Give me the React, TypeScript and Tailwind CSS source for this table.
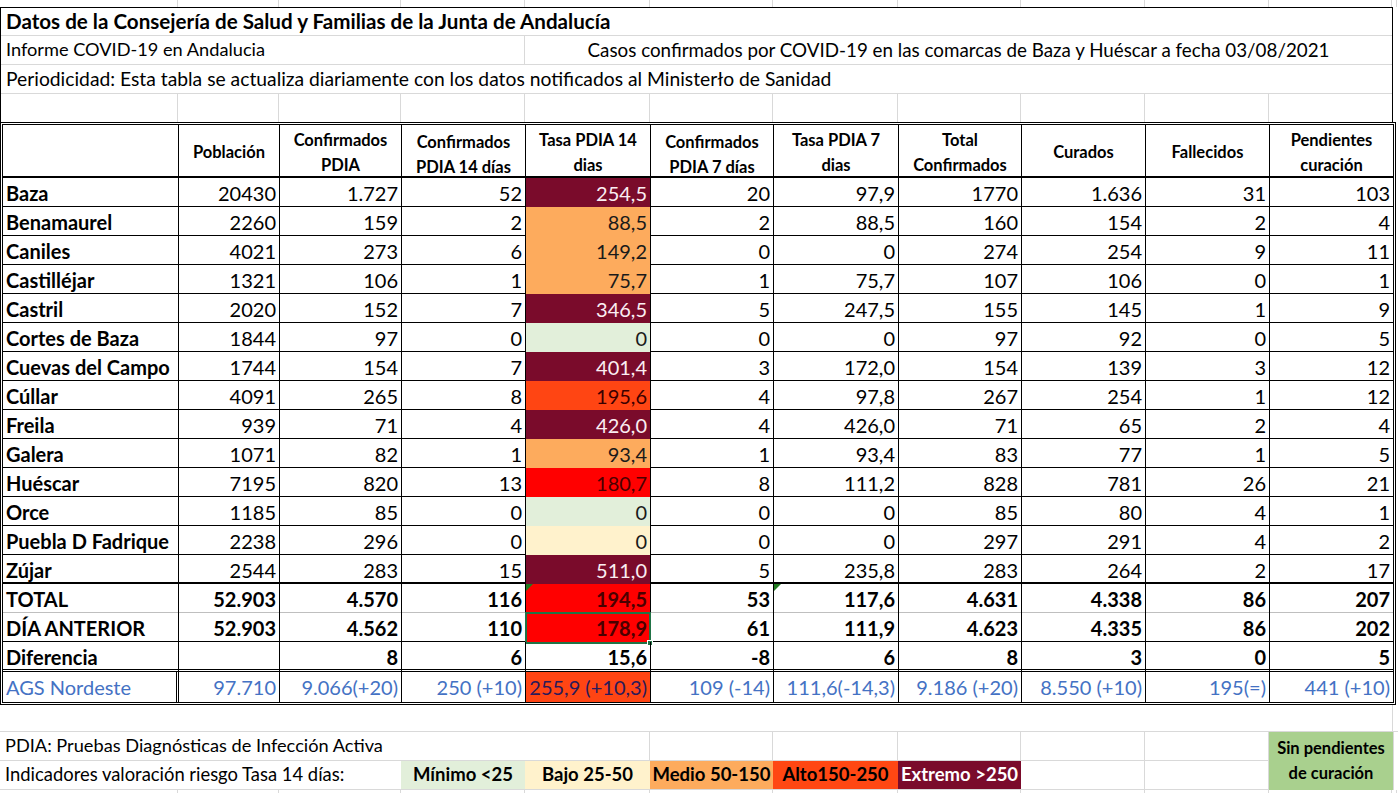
import clsx from 'clsx';

type Level = 'min' | 'bajo' | 'medio' | 'alto' | 'rojo' | 'extremo' | 'none';

interface Row {
  name: string;
  values: string[];
  level: Level;
}

const rows: Row[] = [
  { name: 'Baza', values: ['20430', '1.727', '52', '254,5', '20', '97,9', '1770', '1.636', '31', '103'], level: 'extremo' },
  { name: 'Benamaurel', values: ['2260', '159', '2', '88,5', '2', '88,5', '160', '154', '2', '4'], level: 'medio' },
  { name: 'Caniles', values: ['4021', '273', '6', '149,2', '0', '0', '274', '254', '9', '11'], level: 'medio' },
  { name: 'Castilléjar', values: ['1321', '106', '1', '75,7', '1', '75,7', '107', '106', '0', '1'], level: 'medio' },
  { name: 'Castril', values: ['2020', '152', '7', '346,5', '5', '247,5', '155', '145', '1', '9'], level: 'extremo' },
  { name: 'Cortes de Baza', values: ['1844', '97', '0', '0', '0', '0', '97', '92', '0', '5'], level: 'min' },
  { name: 'Cuevas del Campo', values: ['1744', '154', '7', '401,4', '3', '172,0', '154', '139', '3', '12'], level: 'extremo' },
  { name: 'Cúllar', values: ['4091', '265', '8', '195,6', '4', '97,8', '267', '254', '1', '12'], level: 'alto' },
  { name: 'Freila', values: ['939', '71', '4', '426,0', '4', '426,0', '71', '65', '2', '4'], level: 'extremo' },
  { name: 'Galera', values: ['1071', '82', '1', '93,4', '1', '93,4', '83', '77', '1', '5'], level: 'medio' },
  { name: 'Huéscar', values: ['7195', '820', '13', '180,7', '8', '111,2', '828', '781', '26', '21'], level: 'rojo' },
  { name: 'Orce', values: ['1185', '85', '0', '0', '0', '0', '85', '80', '4', '1'], level: 'min' },
  { name: 'Puebla D Fadrique', values: ['2238', '296', '0', '0', '0', '0', '297', '291', '4', '2'], level: 'bajo' },
  { name: 'Zújar', values: ['2544', '283', '15', '511,0', '5', '235,8', '283', '264', '2', '17'], level: 'extremo' },
];

const levelClass: Record<Level, string> = {
  min: 'bg-[#e2efda] text-[#1a1a1a]',
  bajo: 'bg-[#fff2cc] text-[#1a1a1a]',
  medio: 'bg-[#fdab5d] text-[#1a1a1a]',
  alto: 'bg-[#ff4513] text-[#3a0000]',
  rojo: 'bg-[#ff0000] text-[#4a0000]',
  extremo: 'bg-[#7a0b2b] text-[#fbeef2]',
  none: '',
};

const TABLE_COLS =
  'grid grid-cols-[176px_101px_122px_124px_125px_123px_125px_123px_124px_124px_123px]';
const BOX_COLS =
  'grid grid-cols-[177px_101px_122px_124px_125px_123px_125px_123px_124px_124px_123px]';
const SHEET_COLS =
  'grid grid-cols-[178px_101px_122px_124px_125px_123px_125px_123px_124px_124px_123px_5px]';

const headers = [
  ['Población'],
  ['Confirmados', 'PDIA'],
  ['Confirmados', 'PDIA 14 días'],
  ['Tasa PDIA 14', 'dias'],
  ['Confirmados', 'PDIA 7 días'],
  ['Tasa PDIA 7', 'dias'],
  ['Total', 'Confirmados'],
  ['Curados'],
  ['Fallecidos'],
  ['Pendientes', 'curación'],
];

function GreenTick() {
  return (
    <svg className="absolute left-0 top-0 z-10" width="7" height="7" viewBox="0 0 7 7">
      <polygon points="0,0 7,0 0,7" fill="#1f7a1f" />
    </svg>
  );
}

function NumCell({
  children,
  className,
  last,
}: {
  children?: React.ReactNode;
  className?: string;
  last?: boolean;
}) {
  return (
    <div
      className={clsx(
        'relative flex items-center justify-end pr-[3px] whitespace-nowrap',
        !last && 'border-r border-black',
        className,
      )}
    >
      {children}
    </div>
  );
}

function DataRow({ row, isLast }: { row: Row; isLast: boolean }) {
  return (
    <div
      className={clsx(
        TABLE_COLS,
        'h-[29px] border-black text-[20px]',
        isLast ? 'border-b-2' : 'border-b',
      )}
    >
      <div className="flex items-center pl-[3px] font-bold border-r border-black whitespace-nowrap">
        {row.name}
      </div>
      {row.values.map((v, i) => (
        <NumCell key={i} last={i === 9} className={i === 3 ? levelClass[row.level] : ''}>
          {v}
        </NumCell>
      ))}
    </div>
  );
}

function SheetStrip({ className }: { className?: string }) {
  return (
    <div className={clsx(SHEET_COLS, className)}>
      {Array.from({ length: 12 }).map((_, i) => (
        <div key={i} className="border-r border-[#d9d9d9]" />
      ))}
    </div>
  );
}

export default function App() {
  const total = ['52.903', '4.570', '116', '194,5', '53', '117,6', '4.631', '4.338', '86', '207'];
  const prev = ['52.903', '4.562', '110', '178,9', '61', '111,9', '4.623', '4.335', '86', '202'];
  const diff = ['', '8', '6', '15,6', '-8', '6', '8', '3', '0', '5'];
  const ags = [
    '97.710',
    '9.066(+20)',
    '250 (+10)',
    '255,9 (+10,3)',
    '109 (-14)',
    '111,6(-14,3)',
    '9.186 (+20)',
    '8.550 (+10)',
    '195(=)',
    '441 (+10)',
  ];

  return (
    <div
      className="w-[1398px] h-[793px] overflow-hidden bg-white text-black"
      style={{ fontFamily: 'Lato, "Open Sans", sans-serif' }}
    >
      <SheetStrip className="h-[7px]" />

      {/* bloque de cabecera */}
      <div className="w-[1393px] border-l border-r border-t border-black">
        <div className="h-[28px] flex items-center pl-[5px] font-bold text-[20.6px] border-b border-[#d9d9d9] whitespace-nowrap">
          Datos de la Consejería de Salud y Familias de la Junta de Andalucía
        </div>
        <div className="h-[29px] flex border-b border-[#d9d9d9] whitespace-nowrap">
          <div className="w-[524px] flex items-center pl-[5px] border-r border-[#d9d9d9] text-[18.2px]">
            Informe COVID-19 en Andalucia
          </div>
          <div className="flex-1 flex items-center justify-center text-[18.8px]">
            Casos confirmados por COVID-19 en las comarcas de Baza y Huéscar a fecha 03/08/2021
          </div>
        </div>
        <div className="h-[29px] flex items-center pl-[5px] border-b border-[#d9d9d9] text-[19.3px] whitespace-nowrap">
          Periodicidad: Esta tabla se actualiza diariamente con los datos notificados al Ministerło de Sanidad
        </div>
        <div className={clsx(BOX_COLS, 'h-[28px]')}>
          {Array.from({ length: 11 }).map((_, i) => (
            <div key={i} className={clsx(i < 10 && 'border-r border-[#d9d9d9]')} />
          ))}
        </div>
      </div>

      {/* tabla */}
      <div className="w-[1396px] border-[3px] border-double border-black">
        <div className={clsx(TABLE_COLS, 'h-[53px] border-b-2 border-black text-[16.5px] font-bold leading-[25px]')}>
          <div className="border-r border-black" />
          {headers.map((h, i) => (
            <div
              key={i}
              className={clsx(
                'flex flex-col items-center justify-center text-center whitespace-nowrap',
                i < 9 && 'border-r border-black',
                (i === 2 || i === 4) && 'pt-[5px]',
              )}
            >
              {h.map((l) => (
                <span key={l}>{l}</span>
              ))}
            </div>
          ))}
        </div>

        {rows.map((r, i) => (
          <DataRow key={r.name} row={r} isLast={i === rows.length - 1} />
        ))}

        <div className={clsx(TABLE_COLS, 'h-[29px] border-b border-[#bfbfbf] text-[20px] font-bold')}>
          <div className="flex items-center pl-[3px] border-r border-black">TOTAL</div>
          {total.map((v, i) => (
            <NumCell key={i} last={i === 9} className={clsx(i === 3 && levelClass.rojo)}>
              {(i === 3 || i === 5) && <GreenTick />}
              {v}
            </NumCell>
          ))}
        </div>

        <div className={clsx(TABLE_COLS, 'h-[29px] border-b border-black text-[20px] font-bold')}>
          <div className="flex items-center pl-[3px] border-r border-black">DÍA ANTERIOR</div>
          {prev.map((v, i) => (
            <NumCell key={i} last={i === 9} className={clsx(i === 3 && levelClass.rojo)}>
              {i === 3 && (
                <>
                  <div className="absolute -left-px -top-px -right-px -bottom-px border-2 border-[#217346]" />
                  <div className="absolute -right-[3px] -bottom-[3px] w-[6px] h-[6px] bg-[#217346] border border-white" />
                </>
              )}
              <span className="relative">{v}</span>
            </NumCell>
          ))}
        </div>

        <div className={clsx(TABLE_COLS, 'h-[30px] border-b-[3px] border-double border-black text-[20px] font-bold')}>
          <div className="flex items-center pl-[3px] border-r border-black">Diferencia</div>
          {diff.map((v, i) => (
            <NumCell key={i} last={i === 9}>
              {v}
            </NumCell>
          ))}
        </div>

        <div className={clsx(TABLE_COLS, 'h-[30px] text-[20px] text-[#4472c4]')}>
          <div className="flex items-center pl-[3px] border-r-[3px] border-double border-black">
            AGS Nordeste
          </div>
          {ags.map((v, i) => (
            <NumCell key={i} last={i === 9} className={clsx(i === 3 && 'bg-[#ff4513] text-[#2a1a5a]')}>
              {v}
            </NumCell>
          ))}
        </div>
      </div>

      {/* notas */}
      <div className="h-[27px] w-[1398px] border-b border-[#d9d9d9] flex">
        <div className="w-[1393px] border-r border-[#d9d9d9]" />
      </div>
      <div className="flex h-[58px]">
        <div className="w-[1269px]">
          <div className="h-[29px] flex border-b border-[#d9d9d9] text-[18.2px]">
            <div className="w-[650px] flex items-center pl-[5px] border-r border-[#d9d9d9]">
              PDIA: Pruebas Diagnósticas de Infección Activa
            </div>
            {[123, 125, 123, 124, 124].map((w, i) => (
              <div key={i} style={{ width: w }} className="border-r border-[#d9d9d9]" />
            ))}
          </div>
          <div className="h-[29px] flex border-b border-[#d9d9d9] whitespace-nowrap">
            <div className="w-[401px] flex items-center pl-[5px] text-[18.4px]">
              Indicadores valoración riesgo Tasa 14 días:
            </div>
            <div className="w-[124px] flex items-center justify-center font-bold text-[18.5px] bg-[#e2efda]">
              Mínimo &lt;25
            </div>
            <div className="w-[125px] flex items-center justify-center font-bold text-[18.5px] bg-[#fff2cc]">
              Bajo 25-50
            </div>
            <div className="w-[123px] flex items-center justify-center font-bold text-[18.5px] bg-[#fdab5d]">
              Medio 50-150
            </div>
            <div className="w-[125px] flex items-center justify-center font-bold text-[18.5px] bg-[#ff4713]">
              Alto150-250
            </div>
            <div className="w-[123px] flex items-center justify-center font-bold text-[18.5px] bg-[#7a0b2b] text-white">
              Extremo &gt;250
            </div>
            <div className="w-[124px] border-r border-[#d9d9d9]" />
            <div className="w-[124px] border-r border-[#d9d9d9]" />
          </div>
        </div>
        <div className="w-[124px] flex flex-col items-center justify-center bg-[#a9d08e] font-bold text-[16.5px] leading-[25px] whitespace-nowrap">
          <span>Sin pendientes</span>
          <span>de curación</span>
        </div>
        <div className="w-[5px] border-l border-[#d9d9d9]" />
      </div>
      <SheetStrip className="h-[5px]" />
    </div>
  );
}
